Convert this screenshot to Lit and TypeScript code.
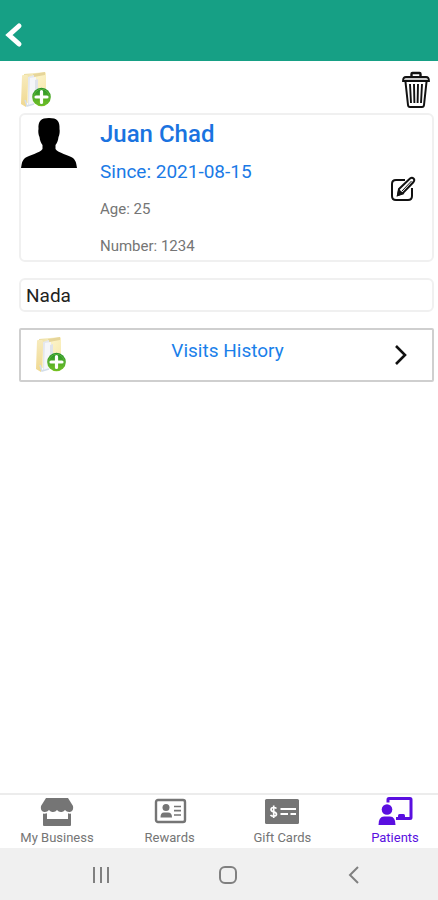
import { LitElement, html, css, svg } from "lit";
import { customElement, property, state } from "lit/decorators.js";
import { classMap } from "lit/directives/class-map.js";

@customElement("folder-icon")
class FolderIcon extends LitElement {
  static styles = css`
    :host { display: block; width: 32px; height: 38px; }
    svg { display: block; width: 100%; height: 100%; }
  `;
  render() {
    return html`<svg viewBox="0 0 32 38" aria-hidden="true">
      <defs>
        <linearGradient id="front" x1="0" y1="0" x2="0" y2="1">
          <stop offset="0" stop-color="#f7ebbd" /><stop offset="1" stop-color="#f0d890" />
        </linearGradient>
        <linearGradient id="back" x1="0" y1="0" x2="1" y2="1">
          <stop offset="0" stop-color="#eadb9f" /><stop offset=".4" stop-color="#fbf2c6" /><stop offset="1" stop-color="#f5e6a6" />
        </linearGradient>
        <linearGradient id="plus" x1="0" y1="0" x2="0" y2="1">
          <stop offset="0" stop-color="#1f8f2c" /><stop offset="1" stop-color="#7cc520" />
        </linearGradient>
      </defs>
      <path d="M3 3 L14 2 L24 1 L25 2 V28 L8 33 L3 30Z" fill="url(#back)" />
      <path d="M12 3 L24 1 V4 L13 6Z" fill="#e6d59a" />
      <path d="M7 6 L13 4 L14 32 L7 35Z" fill="#e4e7ee" />
      <path d="M9 7 L15 6 V32 L8 35Z" fill="#f5f6f9" />
      <path d="M14 9 L17 8 V31 L14 33Z" fill="#dfe3ea" />
      <path d="M1 5 Q1 4 2 4 L6 4 Q7 4 7 6 L6 29 L5 36 L0 33Z" fill="url(#front)" />
      <path d="M4 29 L6 35 L13 33" fill="none" stroke="#d3deea" stroke-width="1.500" />
      <circle cx="20.500" cy="26" r="9.300" fill="url(#plus)" />
      <circle cx="20.500" cy="26" r="7.800" fill="none" stroke="#5cb53a" stroke-width="1" />
      <path d="M20.500 20.500V31.500M15 26H26" stroke="#fff" stroke-width="3.200" stroke-linecap="round" />
    </svg>`;
  }
}

const icons = {
  business: svg`<path d="M7 1H29L34 9Q35 14 31 15Q28 15.500 26 13Q24 15.500 21.800 15Q19.500 15 18 13Q16.500 15 14.200 15Q12 15.500 10 13Q8 15.500 5 15Q1 14 2 9Z" fill="currentColor"/><path d="M4 16.500Q6 17 8 16.300V22H29V16.300Q30 17 32 16.500V28Q32 29 31 29H5Q4 29 4 28Z" fill="currentColor"/>`,
  rewards: svg`<rect x="4" y="3" width="29" height="22" rx="2" fill="none" stroke="currentColor" stroke-width="2.400"/><circle cx="14" cy="10.500" r="3.500" fill="currentColor"/><path d="M8.500 20.500Q8.500 15.500 12 15.500H16Q20 15.500 20 20.500Z" fill="currentColor"/><path d="M22 9.500H29M22 13.700H29M22 18H29" stroke="currentColor" stroke-width="1.700"/>`,
  cards: svg`<rect x="1" y="2" width="34" height="25" rx="1.500" fill="currentColor"/><path d="M12.500 11.500Q11.500 10.500 9.500 10.500Q7 10.700 7 12.500Q7 14.200 9.700 14.800Q12.500 15.400 12.500 17.300Q12.500 19 9.700 19.200Q7.500 19.200 6.500 18M9.700 8.500V21" fill="none" stroke="#fff" stroke-width="1.700"/><path d="M16.500 12H32M16.500 17H24M26.500 17H32" stroke="#fff" stroke-width="1.800"/>`,
  patients: svg`<path d="M11 5.500V2.500Q11 1.500 12 1.500H33Q34 1.500 34 2.500V20.500Q34 21.500 33 21.500H19" fill="none" stroke="currentColor" stroke-width="3"/><path d="M21 21V18.500Q21 17 22.500 17H26.500Q28 17 28 18.500V21Z" fill="currentColor"/><circle cx="10" cy="12.500" r="5.300" fill="currentColor"/><path d="M1.500 28Q1.500 19.500 7 19.500H13Q18.500 19.500 18.500 28Z" fill="currentColor"/>`,
};

@customElement("tab-item")
class TabItem extends LitElement {
  @property() label = "";
  @property() icon: keyof typeof icons = "business";
  @property({ type: Boolean }) active = false;
  static styles = css`
    :host { display: block; width: 76px; }
    button {
      display: flex; flex-direction: column; align-items: center; gap: 2px;
      width: 100%; padding: 2px 0 0; border: 0; background: none; color: #757575;
      font: 13px/18px Roboto, sans-serif; white-space: nowrap; cursor: pointer;
    }
    .active { color: #5a0fe0; }
    svg { display: block; width: 36px; height: 30px; }
  `;
  render() {
    return html`<button class=${classMap({ active: this.active })} aria-current=${this.active ? "page" : "false"}>
      <svg viewBox="0 0 36 30" aria-hidden="true">${icons[this.icon]}</svg>
      <span>${this.label}</span>
    </button>`;
  }
}

@customElement("app-root")
class AppRoot extends LitElement {
  @state() private note = "Nada";

  static styles = css`
    :host {
      display: flex; flex-direction: column; min-height: 100vh;
      background: #fff; color: #222; font-family: Roboto, sans-serif;
    }
    * { box-sizing: border-box; }
    svg { display: block; }
    button { padding: 0; border: 0; background: none; color: inherit; font: inherit; cursor: pointer; }
    h1, p { margin: 0; font-weight: 400; }
    header { display: flex; align-items: flex-end; height: 61px; padding: 0 4px 12px; background: #16a085; color: #fff; }
    main { flex: 1; display: flex; flex-direction: column; padding: 0 4px 16px 19px; }
    .tools { display: flex; justify-content: space-between; align-items: center; height: 52px; padding: 6px 3px 0 2px; }
    .card {
      display: flex; align-items: flex-start; height: 149px; padding: 2px 16px 0 0;
      border: 2px solid #f0f0f0; border-radius: 6px;
    }
    .photo { margin-top: 1px; }
    .info { flex: 1; padding: 1px 0 0 23px; }
    h1 { font-size: 24px; line-height: 32px; font-weight: 500; color: #1a73e0; }
    .since { margin-top: 4px; font-size: 19px; line-height: 36px; color: #1a7ae6; }
    .meta { padding-top: 1px; font-size: 15px; line-height: 36px; color: #757575; }
    .edit { align-self: center; }
    .note {
      width: 100%; height: 34px; margin: 16px 0; padding: 0 5px;
      border: 2px solid #f0f0f0; border-radius: 6px; background: #fff;
      color: #222; font: 19px/28px Roboto, sans-serif;
    }
    .visits {
      display: grid; grid-template-columns: 36px 1fr 36px; align-items: center;
      width: 100%; height: 54px; padding: 0 13px 0 15px; border: 2px solid #cfcfcf; border-radius: 2px;
    }
    .visits-label { padding-bottom: 8px; color: #1a80ea; font-size: 19px; line-height: 24px; }
    .next { justify-self: center; }
    .tabs { display: flex; justify-content: space-between; height: 55px; padding: 0 5px 0 19px; border-top: 2px solid #ececec; }
    .system { display: flex; justify-content: space-between; align-items: center; height: 52px; padding: 2px 66px 0 83px; background: #f0f0f0; color: #808080; }
  `;

  render() {
    return html`
      <header>
        <button aria-label="Back">
          <svg width="20" height="28" viewBox="0 0 20 28"><path d="M15 5L5 14L15 23" fill="none" stroke="#fff" stroke-width="5" stroke-linecap="round" /></svg>
        </button>
      </header>
      <main>
        <div class="tools">
          <button aria-label="Add record"><folder-icon></folder-icon></button>
          <button aria-label="Delete patient">
            <svg width="30" height="38" viewBox="0 0 30 38" fill="none" stroke="#111" stroke-width="2">
              <path d="M10.500 5V3Q10.500 2 11.500 2H18.500Q19.500 2 19.500 3V5" stroke-width="2.400" />
              <path d="M2 10Q2 6 5 6H25Q28 6 28 10Z" fill="#ccc" stroke-width="1.800" />
              <path d="M4.500 11L7 34Q7.200 36 9 36H21Q22.800 36 23 34L25.500 11" stroke-width="2" />
              <path d="M9 13L10 32M13 13L13.400 32M17 13L16.600 32M21 13L20 32" stroke-width="1.900" />
            </svg>
          </button>
        </div>
        <section class="card">
          <svg class="photo" width="56" height="50" viewBox="0 0 56 50" role="img" aria-label="Patient photo">
            <path d="M28 0C36 0 39 3 38.500 11C39 13 38.600 17 37.500 19C37 23 36 25 34.500 27V31C37 35 48 37 52 40Q55 42 56 50H0Q1 42 4 40C8 37 19 35 21.500 31V27C20 25 19 23 18.500 19C17.400 17 17 13 17.500 11C17 3 20 0 28 0Z" fill="#000" />
          </svg>
          <div class="info">
            <h1>Juan Chad</h1>
            <p class="since">Since: 2021-08-15</p>
            <p class="meta">Age: 25</p>
            <p class="meta">Number: 1234</p>
          </div>
          <button class="edit" aria-label="Edit patient">
            <svg width="26" height="26" viewBox="0 0 26 26" fill="none" stroke="#111" stroke-width="2">
              <path d="M15 4H6Q2 4 2 8V20Q2 24 6 24H18Q22 24 22 20V12" />
              <path d="M9 13L20 2.500Q22 1 23.500 2.500Q25 4 23.500 6L13 17L8 19Z" fill="#fff" />
              <path d="M8 19L9 14.500L12.500 17.500Z" fill="#111" /><path d="M12 15L21.500 5" stroke-width="1" />
            </svg>
          </button>
        </section>
        <input class="note" aria-label="Notes" .value=${this.note} @input=${(e: InputEvent) => (this.note = (e.target as HTMLInputElement).value)} />
        <button class="visits">
          <folder-icon></folder-icon>
          <span class="visits-label">Visits History</span>
          <svg class="next" width="16" height="24" viewBox="0 0 16 24" aria-hidden="true"><path d="M3 3L12 12L3 21" fill="none" stroke="#111" stroke-width="2.600" /></svg>
        </button>
      </main>
      <nav class="tabs" aria-label="Sections">
        <tab-item label="My Business" icon="business"></tab-item>
        <tab-item label="Rewards" icon="rewards"></tab-item>
        <tab-item label="Gift Cards" icon="cards"></tab-item>
        <tab-item label="Patients" icon="patients" active></tab-item>
      </nav>
      <footer class="system">
        <button aria-label="Recent apps"><svg width="36" height="20" viewBox="0 0 36 20"><path d="M11 2V18M18 2V18M25 2V18" stroke="currentColor" stroke-width="2" /></svg></button>
        <button aria-label="Home"><svg width="36" height="20" viewBox="0 0 36 20"><rect x="10" y="2" width="16" height="16" rx="5" fill="none" stroke="currentColor" stroke-width="2" /></svg></button>
        <button aria-label="System back"><svg width="36" height="20" viewBox="0 0 36 20"><path d="M22 2L14 10L22 18" fill="none" stroke="currentColor" stroke-width="2" /></svg></button>
      </footer>
    `;
  }
}
